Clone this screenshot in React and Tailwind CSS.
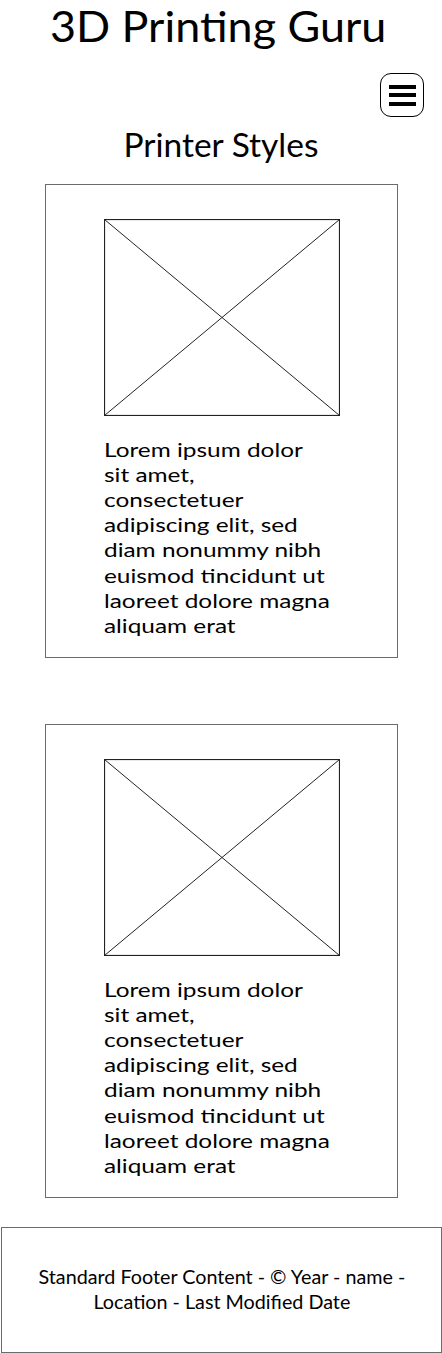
import React from "react";

const lines = [
  "Lorem ipsum dolor",
  "sit amet,",
  "consectetuer",
  "adipiscing elit, sed",
  "diam nonummy nibh",
  "euismod tincidunt ut",
  "laoreet dolore magna",
  "aliquam erat",
];

function Card() {
  return (
    <div className="w-[353px] h-[474px] border border-[#6b6b6b] flex flex-col items-start pl-[58px] pt-[34px]">
      <svg width="236" height="197" viewBox="0 0 236 197" className="block">
        <rect x="0.5" y="0.5" width="235" height="196" fill="none" stroke="#222" strokeWidth="1.2" />
        <line x1="0.5" y1="0.5" x2="235.5" y2="196.5" stroke="#222" strokeWidth="1" />
        <line x1="235.5" y1="0.5" x2="0.5" y2="196.5" stroke="#222" strokeWidth="1" />
      </svg>
      <p className="mt-[20.5px] text-[19.5px] leading-[25.2px] text-black origin-left scale-x-[1.25]">
        {lines.map((l, i) => (
          <span key={i} className="block whitespace-nowrap">{l}</span>
        ))}
      </p>
    </div>
  );
}

export default function App() {
  return (
    <div className="w-[442px] h-[1353px] bg-white flex flex-col items-center font-['Lato',sans-serif] text-black">
      <h1 className="text-[43px] leading-[51px] scale-x-[1.044] mr-[6px]">3D Printing Guru</h1>
      <div className="w-full flex justify-end pr-[18px] mt-[22px]">
        <button className="w-[44px] h-[44px] rounded-[11px] border border-black flex flex-col items-center justify-center gap-[4.5px]">
          <span className="block w-[27px] h-[4px] bg-black"></span>
          <span className="block w-[27px] h-[4px] bg-black"></span>
          <span className="block w-[27px] h-[4px] bg-black"></span>
        </button>
      </div>
      <h2 className="mt-[7px] text-[33.5px] leading-[40px]">Printer Styles</h2>
      <div className="mt-[20px] flex flex-col gap-[66px] ml-[1px]">
        <Card />
        <Card />
      </div>
      <footer className="mt-[29px] w-[441px] h-[126px] border border-[#6b6b6b] flex items-center justify-center text-center text-[18.5px] leading-[25px] self-end">
        <p className="scale-x-[1.067]">
          Standard Footer Content - © Year - name -<br />
          Location - Last Modified Date
        </p>
      </footer>
    </div>
  );
}
